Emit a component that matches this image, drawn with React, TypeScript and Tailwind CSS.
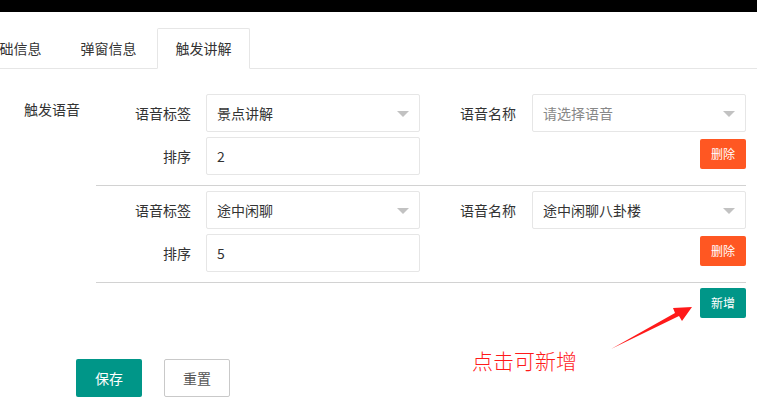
import React from "react";

const font = { fontFamily: '"Noto Sans CJK SC", "Noto Sans", sans-serif' };

function Select({ value, placeholder }: { value?: string; placeholder?: string }) {
  return (
    <div className="relative w-[214px] h-[38px] border border-[#e6e6e6] rounded-[2px] bg-white flex items-center pl-[10px]">
      <span className={value ? "text-[#333] text-[14px]" : "text-[#888] text-[14px]"}>{value ?? placeholder}</span>
      <span className="absolute right-[10px] top-[16px] w-0 h-0 border-l-[6px] border-r-[6px] border-t-[6px] border-l-transparent border-r-transparent border-t-[#c2c2c2]" />
    </div>
  );
}

function Input({ value }: { value: string }) {
  return (
    <div className="w-[214px] h-[38px] border border-[#e6e6e6] rounded-[2px] bg-white flex items-center pl-[10px] text-[14px] text-[#333]">
      {value}
    </div>
  );
}

function Block({ tag, name, sort }: { tag: string; name?: string; sort: string }) {
  return (
    <div className="pt-[5px] pb-[10px] border-b border-[#d2d2d2]">
      <div className="flex h-[38px] items-center">
        <div className="w-[110px] pr-[15px] text-right text-[14px] text-[#333]">语音标签</div>
        <Select value={tag} />
        <div className="w-[112px] pr-[16px] text-right text-[14px] text-[#333]">语音名称</div>
        {name ? <Select value={name} /> : <Select placeholder="请选择语音" />}
      </div>
      <div className="flex h-[38px] mt-[5px] items-start">
        <div className="w-[110px] pr-[15px] text-right text-[14px] text-[#333] leading-[38px]">排序</div>
        <Input value={sort} />
        <div className="flex-1 flex justify-end pt-[2px]">
          <button className="w-[46px] h-[30px] rounded-[2px] bg-[#FF5722] text-white text-[12px]">删除</button>
        </div>
      </div>
    </div>
  );
}

export default function App() {
  return (
    <div className="relative w-[757px] h-[412px] overflow-hidden bg-white" style={font}>
      <div className="h-[12px] bg-black" />
      <div className="mt-[16px] h-[41px] border-b border-[#e6e6e6] flex">
        <div className="flex ml-[-33px] gap-[2px]">
          <div className="w-[93px] h-[40px] leading-[40px] text-center text-[14px] text-[#333]">基础信息</div>
          <div className="w-[93px] h-[40px] leading-[40px] text-center text-[14px] text-[#333]">弹窗信息</div>
          <div className="w-[93px] h-[41px] leading-[39px] text-center text-[14px] text-[#333] border border-[#e6e6e6] border-b-white bg-white rounded-t-[2px]">触发讲解</div>
        </div>
      </div>
      <div className="flex mt-[20px]">
        <div className="w-[96px] pr-[16px] pt-[10px] text-right text-[14px] leading-[20px] text-[#333]">触发语音</div>
        <div className="w-[650px]">
          <Block tag="景点讲解" sort="2" />
          <Block tag="途中闲聊" name="途中闲聊八卦楼" sort="5" />
          <div className="flex justify-end mt-[5px]">
            <button className="w-[46px] h-[30px] rounded-[2px] bg-[#009688] text-white text-[12px]">新增</button>
          </div>
        </div>
      </div>
      <div className="flex ml-[76px] mt-[41px] gap-[22px]">
        <button className="w-[66px] h-[38px] rounded-[2px] bg-[#009688] text-white text-[14px]">保存</button>
        <button className="w-[66px] h-[38px] rounded-[2px] border border-[#c9c9c9] bg-white text-[#555] text-[14px]">重置</button>
      </div>
      <div className="absolute left-[472px] top-[350px] text-[21px] leading-[21px] font-light text-[#ff1a1a]">点击可新增</div>
      <svg className="absolute left-0 top-0 pointer-events-none" width="757" height="412">
        <polygon points="611,349 675,313 673,308 692,307 682,321 679,316" fill="#ff1a1a" />
      </svg>
    </div>
  );
}
